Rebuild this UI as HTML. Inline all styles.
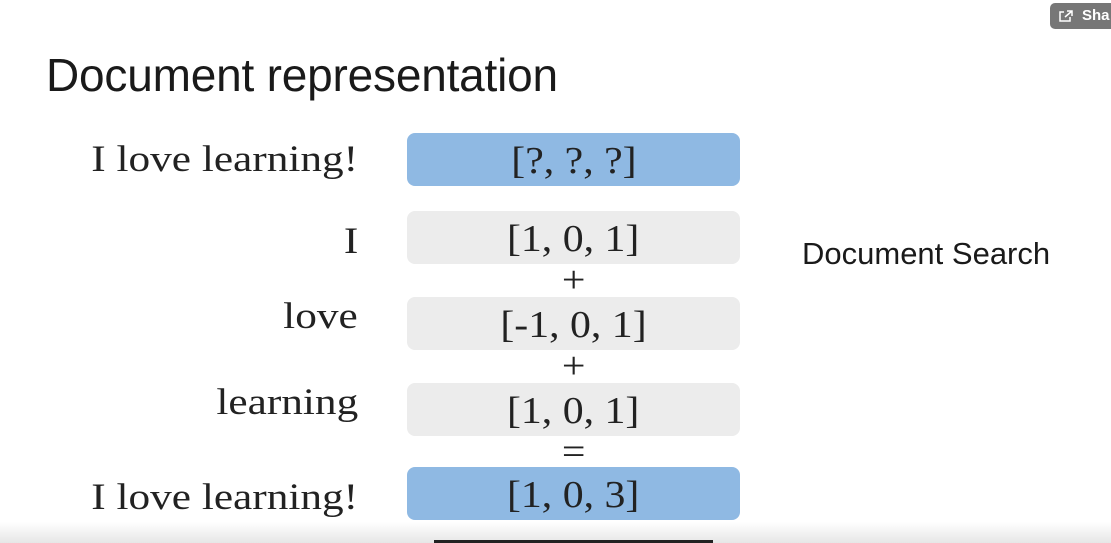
<!DOCTYPE html>
<html><head><style>
body{margin:0;width:1111px;height:543px;background:#fff;position:relative;overflow:hidden;font-family:"Liberation Serif",serif;color:#222}
.t{position:absolute;left:46px;top:48px;font-family:"Liberation Sans",sans-serif;font-size:46px;color:#1a1a1a;letter-spacing:-0.2px}
.box{position:absolute;left:407px;width:333px;height:53px;border-radius:8px;text-align:center;font-size:38px;line-height:56px}
.box span,.op span{display:inline-block;transform:scaleX(1.1)}
.b{background:#8fb9e3}.g{background:#ececec}
.l{position:absolute;right:753px;font-size:37px;transform:scaleX(1.17);transform-origin:right}
.op{position:absolute;left:407px;width:333px;text-align:center;font-size:38px}
.ds{position:absolute;left:802px;top:236px;font-family:"Liberation Sans",sans-serif;font-size:31px;color:#1a1a1a}
.sh{position:absolute;left:1050px;top:3px;width:80px;height:26px;background:#777;border-radius:5px;color:#fff;font-family:"Liberation Sans",sans-serif;font-weight:bold;font-size:15px;line-height:26px;padding-left:32px;box-sizing:border-box}
</style></head><body>
<div class="sh">Sha</div>
<svg style="position:absolute;left:1058px;top:9px" width="16" height="14"><path d="M6 3H2v9h10V8M7 8l7-6M9 2h5v5" stroke="#fff" stroke-width="1.5" fill="none"/></svg>
<div class="t">Document representation</div>
<div class="l" style="top:138px">I love learning!</div>
<div class="box b" style="top:133px"><span>[?, ?, ?]</span></div>
<div class="l" style="top:220px">I</div>
<div class="box g" style="top:211px"><span>[1, 0, 1]</span></div>
<div class="op" style="top:258px"><span>+</span></div>
<div class="l" style="top:295px">love</div>
<div class="box g" style="top:297px"><span>[-1, 0, 1]</span></div>
<div class="op" style="top:344px"><span>+</span></div>
<div class="l" style="top:381px">learning</div>
<div class="box g" style="top:383px"><span>[1, 0, 1]</span></div>
<div class="op" style="top:430px"><span>=</span></div>
<div class="l" style="top:476px">I love learning!</div>
<div class="box b" style="top:467px"><span>[1, 0, 3]</span></div>
<div class="ds">Document Search</div>
<div style="position:absolute;left:0;top:522px;width:1111px;height:21px;background:linear-gradient(#fff,#e6e6e6)"></div>
<div style="position:absolute;left:434px;top:540px;width:279px;height:3px;background:#222"></div>
</body></html>
